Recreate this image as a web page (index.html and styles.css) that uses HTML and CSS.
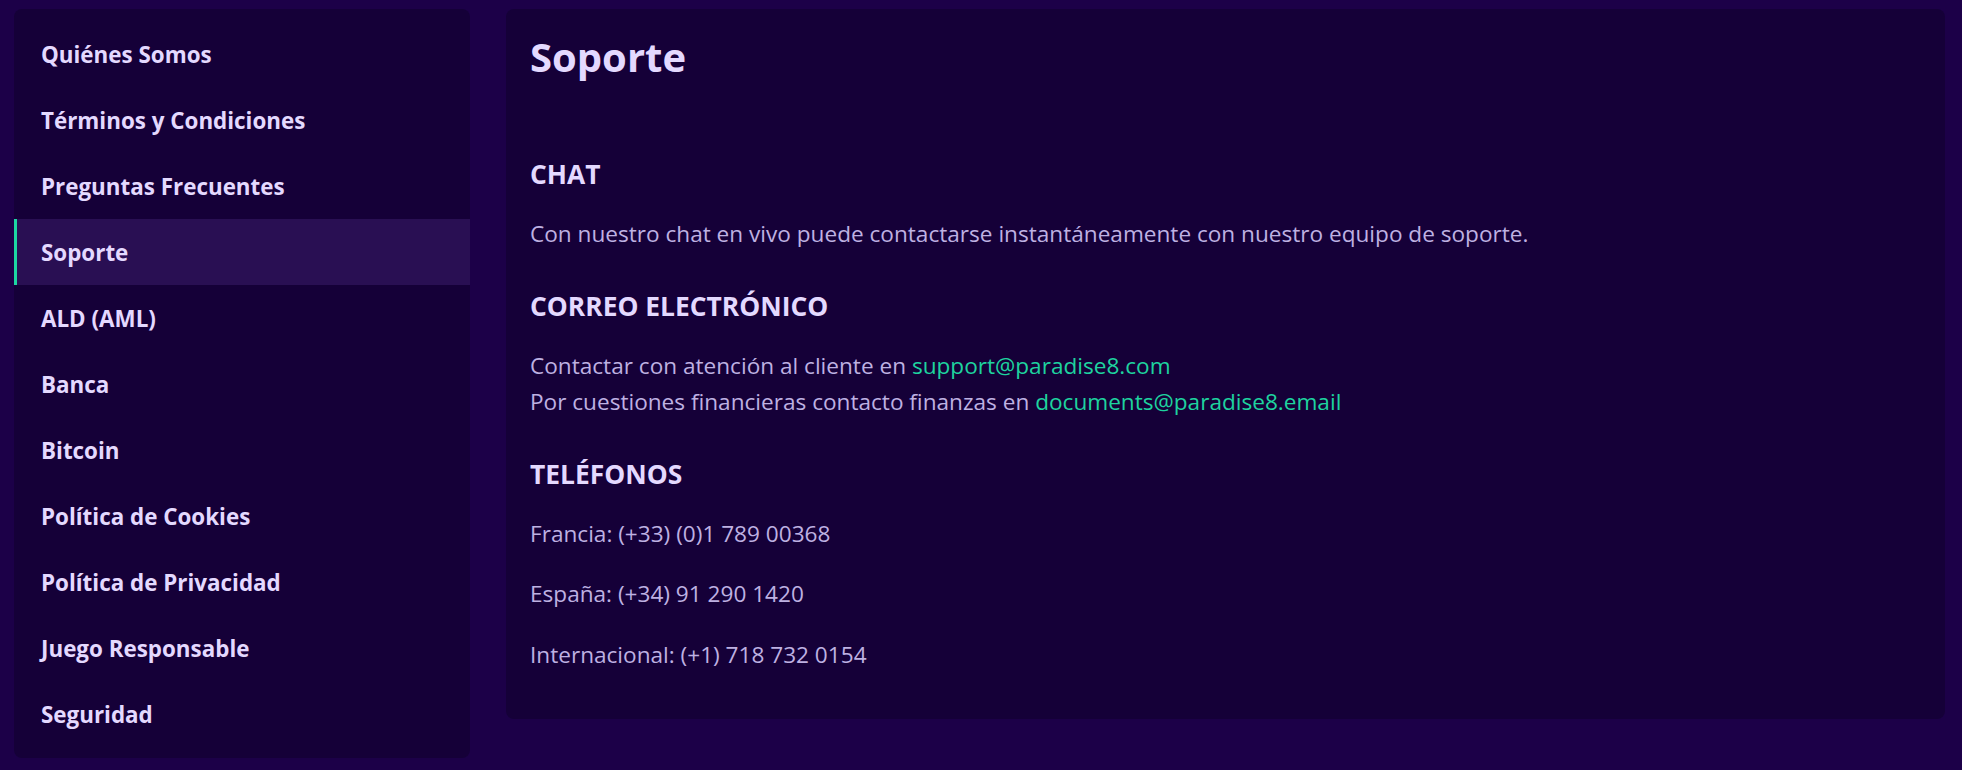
FILE: index.html
```html
<!DOCTYPE html>
<html lang="es">
<head>
  <meta charset="UTF-8">
  <meta name="viewport" content="width=device-width, initial-scale=1">
  <link rel="stylesheet" href="styles.css">
  <title>Soporte</title>
</head>
<body>
<div class="page">
  <nav class="side-menu">
    <a href="#" class="menu-item">Quiénes Somos</a>
    <a href="#" class="menu-item">Términos y Condiciones</a>
    <a href="#" class="menu-item">Preguntas Frecuentes</a>
    <a href="#" class="menu-item active">Soporte</a>
    <a href="#" class="menu-item">ALD (AML)</a>
    <a href="#" class="menu-item">Banca</a>
    <a href="#" class="menu-item">Bitcoin</a>
    <a href="#" class="menu-item">Política de Cookies</a>
    <a href="#" class="menu-item">Política de Privacidad</a>
    <a href="#" class="menu-item">Juego Responsable</a>
    <a href="#" class="menu-item">Seguridad</a>
  </nav>

  <main class="content">
    <h1 class="page-title">Soporte</h1>

    <h2 class="section-title">CHAT</h2>
    <p>Con nuestro chat en vivo puede contactarse instantáneamente con nuestro equipo de soporte.</p>

    <h2 class="section-title">CORREO ELECTRÓNICO</h2>
    <p>
      Contactar con atención al cliente en <a href="#" class="mail">support@paradise8.com</a><br>
      Por cuestiones financieras contacto finanzas en <a href="#" class="mail">documents@paradise8.email</a>
    </p>

    <h2 class="section-title">TELÉFONOS</h2>
    <p>Francia: (+33) (0)1 789 00368</p>
    <p>España: (+34) 91 290 1420</p>
    <p>Internacional: (+1) 718 732 0154</p>
  </main>
</div>
</body>
</html>
```
FILE: styles.css
```css
* {
  margin: 0;
  padding: 0;
  box-sizing: border-box;
}
body {
  background: #1c0048;
  font-family: "Open Sans", "Noto Sans", Arial, sans-serif;
  color: #e4d9ff;
}
.page {
  display: flex;
  align-items: flex-start;
  gap: 36px;
  padding: 9px 17px 12px 14px;
}

/* left menu */
.side-menu {
  width: 456px;
  flex-shrink: 0;
  background: #150038;
  border-radius: 8px;
  padding: 12px 0 11px;
  display: flex;
  flex-direction: column;
}
.menu-item {
  display: flex;
  align-items: center;
  height: 66px;
  padding-left: 24px;
  border-left: 3px solid transparent;
  color: #e4d9ff;
  font-size: 22.4px;
  font-weight: 700;
  text-decoration: none;
}
.menu-item.active {
  background: #290f53;
  border-left-color: #1dd6a2;
}

/* content */
.content {
  flex: 1;
  background: #150038;
  border-radius: 8px;
  padding: 24px 24px 22px;
}
.page-title {
  font-size: 40px;
  font-weight: 700;
  line-height: 48px;
  margin-bottom: 77px;
}
.section-title {
  font-size: 26.4px;
  font-weight: 700;
  line-height: 32px;
  margin-top: 37px;
  margin-bottom: 26px;
}
.content p {
  font-size: 22.6px;
  line-height: 36.5px;
  color: #beb1e2;
  margin-bottom: 24px;
}
.mail {
  color: #1ed39f;
  text-decoration: none;
}
```
